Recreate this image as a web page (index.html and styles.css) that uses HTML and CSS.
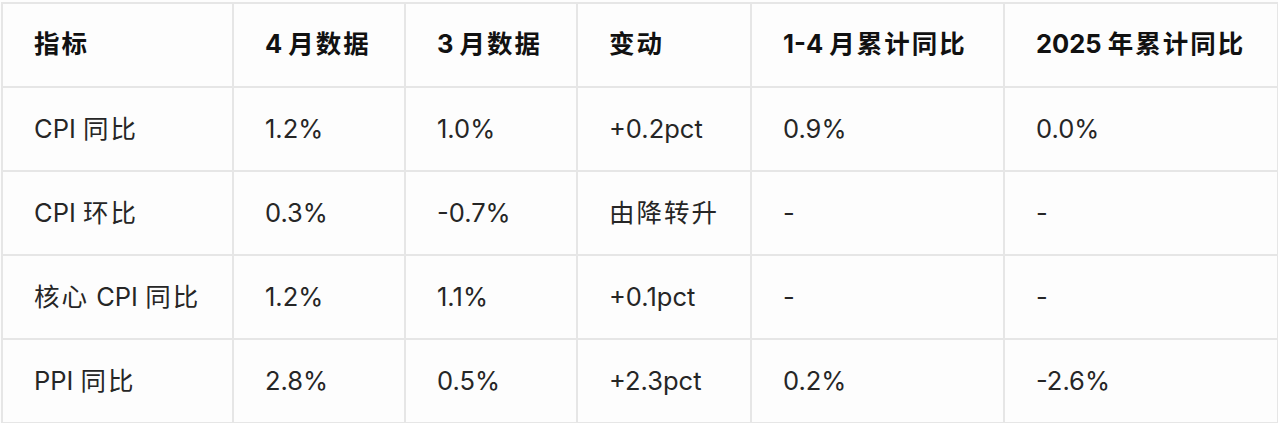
FILE: index.html
```html
<!DOCTYPE html>
<html lang="zh-CN">
<head>
<meta charset="utf-8">
<title>CPI PPI</title>
<link rel="stylesheet" href="styles.css">
</head>
<body>
<table class="data">
  <colgroup>
    <col class="c1"><col class="c2"><col class="c3"><col class="c4"><col class="c5"><col class="c6">
  </colgroup>
  <thead>
    <tr><th><span class="zh">指标</span></th><th>4 <span class="zh">月数据</span></th><th>3 <span class="zh">月数据</span></th><th><span class="zh">变动</span></th><th>1-4 <span class="zh">月累计同比</span></th><th>2025 <span class="zh">年累计同比</span></th></tr>
  </thead>
  <tbody>
    <tr><td>CPI <span class="zh">同比</span></td><td>1.2%</td><td>1.0%</td><td>+0.2pct</td><td>0.9%</td><td>0.0%</td></tr>
    <tr><td>CPI <span class="zh">环比</span></td><td>0.3%</td><td>-0.7%</td><td><span class="zh">由降转升</span></td><td>-</td><td>-</td></tr>
    <tr><td><span class="zh">核心</span> CPI <span class="zh">同比</span></td><td>1.2%</td><td>1.1%</td><td>+0.1pct</td><td>-</td><td>-</td></tr>
    <tr><td>PPI <span class="zh">同比</span></td><td>2.8%</td><td>0.5%</td><td>+2.3pct</td><td>0.2%</td><td>-2.6%</td></tr>
  </tbody>
</table>
</body>
</html>
```
FILE: styles.css
```css
html, body {
  margin: 0;
  padding: 0;
  background: #fdfdfd;
}
body {
  padding: 2px 0 0 1px;
  font-family: Inter, "Noto Sans CJK SC", sans-serif;
  color: #262626;
}
.data {
  border-collapse: collapse;
  table-layout: fixed;
  width: 1276px;
}
.c1 { width: 231px; }
.c2 { width: 172px; }
.c3 { width: 172px; }
.c4 { width: 174px; }
.c5 { width: 253px; }
.c6 { width: 274px; }
.data th, .data td {
  border: 2px solid #e6e6e6;
  height: 82px;
  padding: 0 0 0 31px;
  text-align: left;
  vertical-align: middle;
  font-size: 25.5px;
  line-height: 32px;
  white-space: nowrap;
}
.zh {
  letter-spacing: 2px;
}
.data th {
  font-weight: 700;
  color: #111;
  height: 80px;
  padding-bottom: 2px;
}
.data td {
  font-weight: 400;
}
```
